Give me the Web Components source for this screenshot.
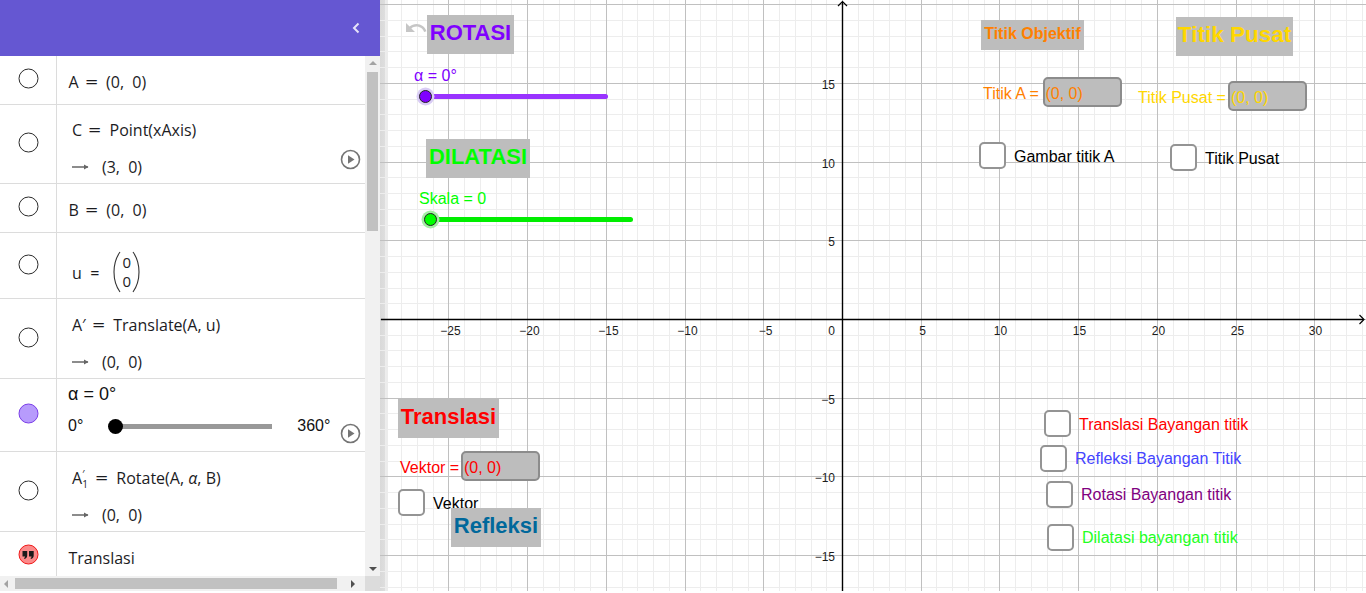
<!DOCTYPE html>
<html lang="id">
<head>
<meta charset="utf-8">
<title>Transformasi</title>
<style>
  html, body { margin: 0; padding: 0; background: #fff; overflow: hidden; }
</style>
</head>
<body>
<ggb-app>
  <algebra-panel slot="panel">
    <algebra-row h="49" marble="empty"><math-line>A <b>=</b> <em>(0, 0)</em></math-line></algebra-row>
    <algebra-row h="79" pad="9" marble="empty" play>
      <math-line indent>C <b>=</b> Point(xAxis)</math-line>
      <math-line indent arrow><em>(3, 0)</em></math-line>
    </algebra-row>
    <algebra-row h="49" marble="empty"><math-line>B <b>=</b> <em>(0, 0)</em></math-line></algebra-row>
    <algebra-row h="66" pad="12" marble="empty"><vector-line></vector-line></algebra-row>
    <algebra-row h="80" pad="9" marble="empty">
      <math-line indent>A′ <b>=</b> Translate(A, u)</math-line>
      <math-line indent arrow><em>(0, 0)</em></math-line>
    </algebra-row>
    <algebra-row h="73" pad="0" marble="filled" play><panel-slider></panel-slider></algebra-row>
    <algebra-row h="80" pad="9" marble="empty">
      <math-line indent>A<u><span>′</span><span>1</span></u> <b>=</b> Rotate(A, <i>α</i>, B)</math-line>
      <math-line indent arrow><em>(0, 0)</em></math-line>
    </algebra-row>
    <algebra-row h="49" marble="text"><math-line>Translasi</math-line></algebra-row>
  </algebra-panel>
  <graphics-view slot="view">
    <undo-icon></undo-icon>

    <title-box x="427" y="15" w="87" h="39" size="22" color="#8000ff">ROTASI</title-box>
    <title-box x="426" y="139" w="104" h="39" size="22" color="#00ff00">DILATASI</title-box>
    <title-box x="981" y="20" w="103" h="30" size="16" color="#ff8000">Titik Objektif</title-box>
    <title-box x="1176" y="17" w="117" h="39" size="22.5" color="#ffd700">Titik Pusat</title-box>
    <title-box x="398" y="398" w="101" h="40" size="22" color="#ff0000">Translasi</title-box>

    <view-slider x="414" y="76" track="183" color="#8000ff" line="#9933ff" halo="#d9ccf5" label="α = 0°" knob-x="11"></view-slider>
    <view-slider x="419" y="199" track="203" color="#00ff00" line="#00ee00" halo="#a5eda5" label="Skala = 0" knob-x="11"></view-slider>

    <view-input x="983" y="77" label="Titik A =" gap="59.5" color="#ff8000"></view-input>
    <view-input x="1138" y="81" label="Titik Pusat =" gap="90" color="#ffd700"></view-input>
    <view-input x="400" y="451" label="Vektor =" gap="61" color="#ff0000"></view-input>

    <view-check x="978.5" y="142">Gambar titik A</view-check>
    <view-check x="1169.5" y="144">Titik Pusat</view-check>
    <view-check x="397.5" y="489">Vektor</view-check>
    <view-check x="1043.5" y="410" color="#ff0000">Translasi Bayangan titik</view-check>
    <view-check x="1039.5" y="444.5" color="#4444ff">Refleksi Bayangan Titik</view-check>
    <view-check x="1045.5" y="480.5" color="#800080">Rotasi Bayangan titik</view-check>
    <view-check x="1046.5" y="523.5" color="#22ff22">Dilatasi bayangan titik</view-check>

    <title-box x="451" y="508" w="90" h="39" size="22" color="#00689b">Refleksi</title-box>
  </graphics-view>
</ggb-app>

<script>
const MATH_FONT = '"Open Sans", "Noto Sans", sans-serif';
const VIEW_FONT = '"Liberation Sans", Arial, sans-serif';

class GgbApp extends HTMLElement {
  constructor() {
    super();
    this.attachShadow({ mode: "open" });
    this.shadowRoot.innerHTML = `
    <style>
      :host { display: flex; width: 1366px; height: 591px; overflow: hidden; background: #fff; }
      .panel { display: block; flex: 0 0 380px; height: 100%; }
      .view { display: block; flex: 1; height: 100%; min-width: 0; }
    </style>
    <div class="panel"><slot name="panel"></slot></div>
    <div class="view"><slot name="view"></slot></div>
    `;
  }
}

class AlgebraPanel extends HTMLElement {
  constructor() {
    super();
    this.attachShadow({ mode: "open" });
    this.shadowRoot.innerHTML = `
    <style>
      :host { display: flex; flex-direction: column; height: 100%; background: #fff; }
      header {
        flex: 0 0 56px; background: #6557d2; display: flex;
        align-items: center; justify-content: flex-end; padding-right: 18px;
      }
      .body { flex: 1; display: flex; min-height: 0; }
      .list { flex: 1; overflow: hidden; min-width: 0; }
      .bar { background: #f1f1f1; display: flex; position: relative; }
      .bar.v { flex: 0 0 15px; flex-direction: column; align-items: center; }
      .bar.h { flex: 0 0 15px; align-items: center; }
      .thumb { background: #c1c1c1; }
      .v .thumb { width: 11px; height: 159px; margin-top: 7px; }
      .h .thumb { height: 11px; width: 322px; margin-left: 7px; }
      .up, .down { width: 0; height: 0; border-left: 4px solid transparent; border-right: 4px solid transparent; }
      .up { margin-top: 5px; border-bottom: 4px solid #a3a3a3; }
      .down { margin-top: auto; margin-bottom: 5px; border-top: 4px solid #505050; }
      .left, .right { width: 0; height: 0; border-top: 4px solid transparent; border-bottom: 4px solid transparent; }
      .left { margin-left: 4px; border-right: 4px solid #a3a3a3; }
      .right { margin-left: 14px; border-left: 4px solid #505050; }
      .corner { margin-left: auto; width: 15px; height: 15px; background: #dcdcdc; }
    </style>
    <header>
      <svg width="12" height="16" viewBox="0 0 12 16"><path d="M8.500 3.500 4 8l4.500 4.500" fill="none" stroke="#e6e3f8" stroke-width="2"/></svg>
    </header>
    <div class="body">
      <div class="list"><slot></slot></div>
      <div class="bar v"><i class="up"></i><i class="thumb"></i><i class="down"></i></div>
    </div>
    <div class="bar h"><i class="left"></i><i class="thumb"></i><i class="right"></i><i class="corner"></i></div>
    `;
  }
}

class AlgebraRow extends HTMLElement {
  static get Styles() {
    return `
      :host {
        display: flex; position: relative; box-sizing: border-box;
        border-bottom: 1px solid #dcdcdc;
      }
      .marble {
        flex: 0 0 56px; border-right: 1px solid #dcdcdc; display: flex;
        align-items: center; justify-content: center; padding-bottom: 3px; box-sizing: content-box;
      }
      .content {
        flex: 1; display: flex; flex-direction: column; justify-content: center; min-width: 0;
        box-sizing: border-box;
      }
      .play { position: absolute; left: 339.5px; top: 43.5px; }
    `;
  }

  marble(kind) {
    if (kind === "filled") {
      return `<svg width="21" height="21"><circle cx="10.500" cy="10.500" r="9.500" fill="#b79bfc" stroke="#7a3de8"/></svg>`;
    }
    if (kind === "text") {
      return `<svg width="21" height="21"><circle cx="10.500" cy="10.500" r="9.500" fill="#fb8a8a" stroke="#f01818"/>
        <path d="M4.500 7h4.700v4.500c0 2-1 3-2.700 3.500l-.5-1c.7-.3 1.100-.9 1.100-1.600H4.500zM11 7h4.700v4.500c0 2-1 3-2.700 3.500l-.5-1c.7-.3 1.100-.9 1.100-1.600H11z" fill="#1a1a1a"/></svg>`;
    }
    return `<svg width="21" height="21"><circle cx="10.500" cy="10.500" r="9.500" fill="#fff" stroke="#2b2b2b"/></svg>`;
  }

  connectedCallback() {
    const pad = this.hasAttribute("pad") ? this.getAttribute("pad") : 4;
    this.attachShadow({ mode: "open" });
    this.shadowRoot.innerHTML = `
    <style>${AlgebraRow.Styles}
      :host { height: ${this.getAttribute("h")}px; }
      .content { padding-top: ${pad}px; }
    </style>
    <div class="marble">${this.marble(this.getAttribute("marble"))}</div>
    <div class="content"><slot></slot></div>
    ${this.hasAttribute("play") ? `<svg class="play" width="21" height="21">
      <circle cx="10.500" cy="10.500" r="9" fill="#fff" stroke="#757575" stroke-width="1.600"/>
      <path d="M8 6.300 14.500 10.500 8 14.700z" fill="#757575"/></svg>` : ""}
    `;
  }
}

class MathLine extends HTMLElement {
  constructor() {
    super();
    this.attachShadow({ mode: "open" });
  }

  connectedCallback() {
    const arrow = this.hasAttribute("arrow");
    this.shadowRoot.innerHTML = `
    <style>
      :host {
        display: flex; align-items: center; gap: 13px; height: 37px; flex: none;
        padding-left: ${this.hasAttribute("indent") ? 15 : 11.5}px;
        font: 16px/1 ${MATH_FONT}; color: #1c1c1f; white-space: nowrap;
      }
      ::slotted(b) {
        font-weight: 400; display: inline-block; margin: 0 6px 0 4px; transform: scaleX(1.4);
      }
      ::slotted(em) { font-style: normal; word-spacing: 4px; }
      ::slotted(u) {
        display: inline-flex; flex-direction: column; text-decoration: none;
        font-size: 10px; line-height: 10px; vertical-align: middle; margin: -4px 1px -4px 0;
      }
    </style>
    ${arrow ? `<svg width="17" height="8" viewBox="0 0 17 8"><path d="M0 4h16" stroke="#666" stroke-width="1.500"/><path d="M12 1.500 16.500 4 12 6.500z" fill="#666"/></svg>` : ""}
    <span><slot></slot></span>
    `;
  }
}

class VectorLine extends HTMLElement {
  constructor() {
    super();
    this.attachShadow({ mode: "open" });
    this.shadowRoot.innerHTML = `
    <style>
      :host {
        display: flex; align-items: center; height: 42px; flex: none; padding: 0 0 0 15px;
        font: 16px/1 ${MATH_FONT}; color: #1c1c1f;
      }
      .eq { margin-right: 14px; padding-top: 2px; }
      .cells { display: flex; flex-direction: column; gap: 4px; width: 11px; align-items: center; font-size: 15px; }
      svg { flex: none; }
    </style>
    <span class="eq">u&nbsp;&nbsp;=</span>
    <svg width="8" height="42" viewBox="0 0 8 42"><path d="M7 1C2 8 1 14 1 21s1 13 6 20" fill="none" stroke="#333" stroke-width="1.100"/></svg>
    <span class="cells"><span>0</span><span>0</span></span>
    <svg width="8" height="42" viewBox="0 0 8 42"><path d="M1 1c5 7 6 13 6 20s-1 13-6 20" fill="none" stroke="#333" stroke-width="1.100"/></svg>
    `;
  }
}

class PanelSlider extends HTMLElement {
  constructor() {
    super();
    this.attachShadow({ mode: "open" });
    this.shadowRoot.innerHTML = `
    <style>
      :host {
        display: flex; flex-direction: column; height: 72px; box-sizing: border-box;
        padding: 3px 0 0 11px; font: 16px/1 ${VIEW_FONT}; color: #111;
      }
      .value { font-size: 18px; height: 24px; line-height: 24px; }
      .line { display: flex; align-items: center; height: 32px; margin-top: 4px; }
      .track { width: 157px; height: 5px; background: #999; margin: 0 25px 0 32px; position: relative; }
      .knob {
        position: absolute; left: -7.500px; top: -5px; width: 15px; height: 15px;
        background: #000; border-radius: 50%;
      }
    </style>
    <div class="value">α = 0°</div>
    <div class="line">
      <span>0°</span>
      <div class="track"><div class="knob"></div></div>
      <span>360°</span>
    </div>
    `;
  }
}

class GraphicsView extends HTMLElement {
  constructor() {
    super();
    this.attachShadow({ mode: "open" });
  }

  connectedCallback() {
    const W = 986, H = 591, OX = 462.5, OY = 319.5, UNIT = 15.744;
    let minor = "", major = "", labels = "";
    for (let i = -30; i <= 35; i++) {
      const x = Math.floor(OX + i * UNIT) + 0.5;
      if (x < 0 || x > W) continue;
      if (i % 5 === 0) {
        major += `M${x} 0V${H}`;
        if (i !== 0) {
          const text = (i < 0 ? "\u2212" : "") + Math.abs(i);
          labels += `<text x="${x + (i < 0 ? 2 : 1)}" y="335" text-anchor="middle">${text}</text>`;
        }
      } else {
        minor += `M${x} 0V${H}`;
      }
    }
    for (let j = -18; j <= 20; j++) {
      const y = Math.floor(OY - j * UNIT) + 0.5;
      if (y < 0 || y > H) continue;
      if (j % 5 === 0) {
        major += `M0 ${y}H${W}`;
        if (j !== 0 && j !== 20) {
          const text = (j < 0 ? "\u2212" : "") + Math.abs(j);
          labels += `<text x="455" y="${y + 5.500}" text-anchor="end">${text}</text>`;
        }
      } else {
        minor += `M0 ${y}H${W}`;
      }
    }
    labels += `<text x="455" y="335" text-anchor="end">0</text>`;

    this.shadowRoot.innerHTML = `
    <style>
      :host { display: block; position: relative; width: 100%; height: 100%; overflow: hidden; background: #fff; }
      svg { position: absolute; left: 0; top: 0; }
      text { font: 12px ${VIEW_FONT}; fill: #1c1c1c; }
      .split {
        position: absolute; left: 0; top: 0; bottom: 0; width: 8px;
        background: linear-gradient(to right, #d9d9d9 0, #dedede 5px, #ececec 6px, #ececec 8px);
      }
      .items { position: absolute; left: -380px; top: 0; width: 1366px; height: 591px; }
    </style>
    <div class="split"></div>
    <svg width="${W}" height="${H}" viewBox="0 0 ${W} ${H}">
      <path d="${minor}" stroke="#ededed" stroke-width="1" fill="none"/>
      <path d="${major}" stroke="#c0c0c0" stroke-width="1" fill="none"/>
      <path d="M1 ${OY}H983M${OX} 591V2" stroke="#000" stroke-width="1.400" fill="none"/>
      <path d="M979.500 315 984 ${OY} 979.500 324M458 6 ${OX} 1.500 467 6" stroke="#000" stroke-width="1.200" fill="none"/>
      ${labels}
    </svg>
    <div class="items"><slot></slot></div>
    `;
  }
}

class UndoIcon extends HTMLElement {
  constructor() {
    super();
    this.attachShadow({ mode: "open" });
    this.shadowRoot.innerHTML = `
    <style>
      :host { position: absolute; left: 404px; top: 16px; width: 24px; height: 24px; }
    </style>
    <svg width="24" height="24" viewBox="0 0 24 24"><path fill="#c6c6c6" d="M12.500 8c-2.650 0-5.050.99-6.900 2.600L2 7v9h9l-3.620-3.620c1.390-1.160 3.160-1.880 5.120-1.880 3.540 0 6.550 2.310 7.600 5.500l2.370-.78C21.080 11.030 17.150 8 12.500 8z"/></svg>
    `;
  }
}

class TitleBox extends HTMLElement {
  constructor() {
    super();
    this.attachShadow({ mode: "open" });
  }

  connectedCallback() {
    const a = (n) => this.getAttribute(n);
    this.shadowRoot.innerHTML = `
    <style>
      :host {
        position: absolute; left: ${a("x")}px; top: ${a("y")}px; width: ${a("w")}px; height: ${a("h")}px;
        box-sizing: border-box; padding-bottom: 3px;
        display: flex; align-items: center; justify-content: center; background: #bdbdbd;
        font: bold ${a("size")}px/1 ${VIEW_FONT}; color: ${a("color")}; white-space: nowrap;
      }
    </style>
    <slot></slot>
    `;
  }
}

class ViewSlider extends HTMLElement {
  constructor() {
    super();
    this.attachShadow({ mode: "open" });
  }

  connectedCallback() {
    const a = (n) => this.getAttribute(n);
    this.shadowRoot.innerHTML = `
    <style>
      :host {
        position: absolute; left: ${a("x")}px; top: ${+a("y") - 9}px;
        font: 16px/18px ${VIEW_FONT}; color: ${a("color")}; white-space: nowrap;
      }
      .track {
        position: relative; width: ${a("track")}px; height: 5px; border-radius: 3px;
        margin: 9px 0 0 ${a("knob-x")}px; background: ${a("line")};
      }
      .knob {
        position: absolute; left: -6.500px; top: -4px; width: 13px; height: 13px; box-sizing: border-box;
        border-radius: 50%; background: ${a("color")}; border: 1px solid #222;
        box-shadow: 0 0 0 2.500px ${a("halo")};
      }
    </style>
    <div>${a("label")}</div>
    <div class="track"><div class="knob"></div></div>
    `;
  }
}

class ViewInput extends HTMLElement {
  constructor() {
    super();
    this.attachShadow({ mode: "open" });
  }

  connectedCallback() {
    const a = (n) => this.getAttribute(n);
    this.shadowRoot.innerHTML = `
    <style>
      :host {
        position: absolute; left: ${a("x")}px; top: ${a("y")}px; display: flex; align-items: center;
        font: 16px/1 ${VIEW_FONT}; color: ${a("color")}; white-space: nowrap;
      }
      .label { width: ${a("gap")}px; padding-top: 4px; }
      .box {
        width: 79px; height: 30px; box-sizing: border-box; padding: 4px 0 0 1px; background: #bdbdbd;
        border: 2px solid #8c8c8c; border-radius: 5px; display: flex; align-items: center;
      }
    </style>
    <span class="label">${a("label")}</span>
    <div class="box">(0, 0)</div>
    `;
  }
}

class ViewCheck extends HTMLElement {
  constructor() {
    super();
    this.attachShadow({ mode: "open" });
  }

  connectedCallback() {
    const a = (n) => this.getAttribute(n);
    this.shadowRoot.innerHTML = `
    <style>
      :host {
        position: absolute; left: ${a("x")}px; top: ${a("y")}px; display: flex; align-items: center; gap: 8.500px;
        font: 16px/1 ${VIEW_FONT}; color: ${a("color") || "#000"}; white-space: nowrap;
      }
      .box {
        width: 27px; height: 27px; box-sizing: border-box; background: #fff;
        border: 2px solid #949494; border-radius: 5px;
      }
      .text { padding-top: 2px; }
    </style>
    <div class="box"></div>
    <span class="text"><slot></slot></span>
    `;
  }
}

customElements.define("ggb-app", GgbApp);
customElements.define("algebra-panel", AlgebraPanel);
customElements.define("algebra-row", AlgebraRow);
customElements.define("math-line", MathLine);
customElements.define("vector-line", VectorLine);
customElements.define("panel-slider", PanelSlider);
customElements.define("graphics-view", GraphicsView);
customElements.define("undo-icon", UndoIcon);
customElements.define("title-box", TitleBox);
customElements.define("view-slider", ViewSlider);
customElements.define("view-input", ViewInput);
customElements.define("view-check", ViewCheck);
</script>
</body>
</html>
